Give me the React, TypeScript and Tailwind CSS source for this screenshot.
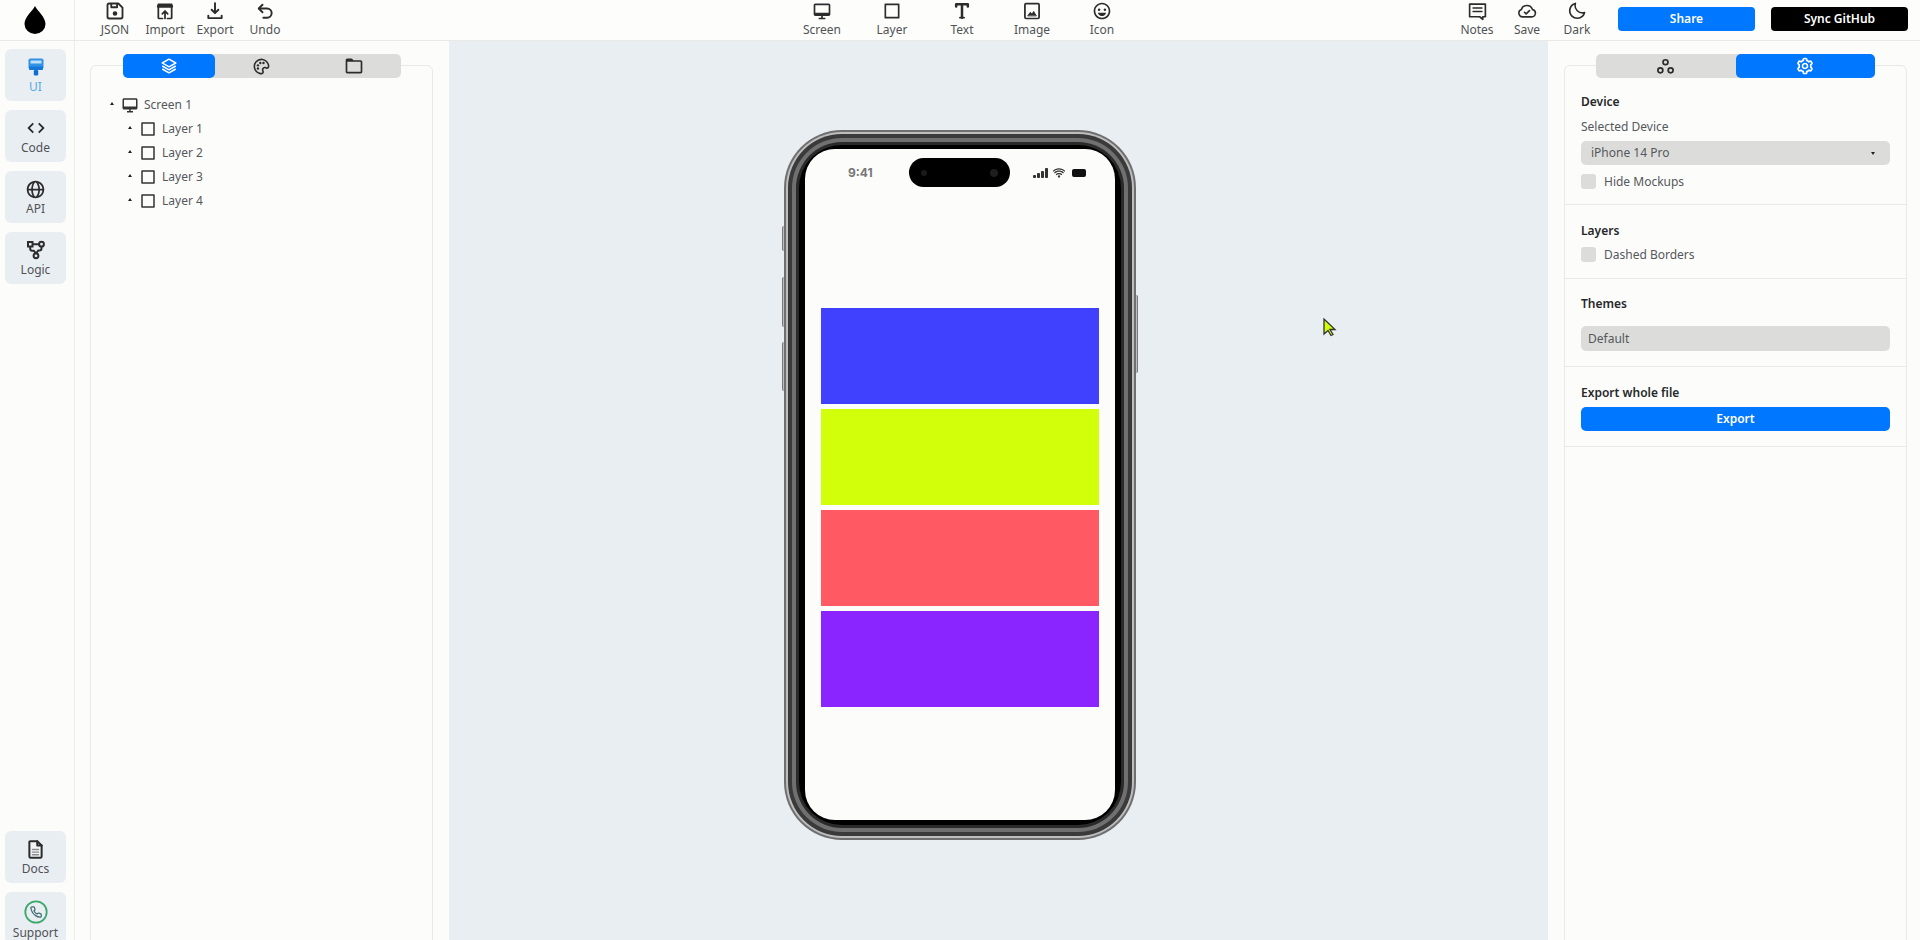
import React from "react";
import {
  BiDesktop, BiSquare, BiHappy, BiMoon, BiLayer, BiPalette, BiFolder, BiCog, BiCode, BiGlobe, BiWifi,
} from "react-icons/bi";

const font = { fontFamily: '"Noto Sans", "Open Sans", sans-serif' };

function Stroke({ size = 20, width = 2, children }: { size?: number; width?: number; children: React.ReactNode }) {
  return (
    <svg width={size} height={size} viewBox="0 0 24 24" fill="none" stroke="currentColor" strokeWidth={width} strokeLinecap="round" strokeLinejoin="round">
      {children}
    </svg>
  );
}

const Cloud = () => (
  <Stroke width={1.9}>
    <path d="M7 19h10.500a4.500 4.500 0 0 0 1-8.900A7 7 0 0 0 5.200 10.300 4.500 4.500 0 0 0 7 19z" />
    <path d="M9 13.500l2 2 4-4" />
  </Stroke>
);

const Floppy = () => (
  <Stroke width={2.2}>
    <path d="M5 3h11l5 5v11a2 2 0 0 1-2 2H5a2 2 0 0 1-2-2V5a2 2 0 0 1 2-2z" />
    <path d="M7.500 3.500v4h7v-4" />
    <circle cx="12" cy="15" r="1.700" fill="currentColor" />
  </Stroke>
);

const ImportIcon = () => (
  <Stroke width={2.1}>
    <path d="M9 21H5a1 1 0 0 1-1-1V4h16v16a1 1 0 0 1-1 1h-4" />
    <path d="M4 6.500h16" strokeWidth={3.400} />
    <path d="M12 21v-8M8.800 15.500 12 12l3.200 3.500" />
  </Stroke>
);

const ExportIcon = () => (
  <Stroke width={2.3}>
    <path d="M12 2.500v11" />
    <path d="M8 10.500l4 4 4-4" />
    <path d="M4 17.500v3h16v-3" />
  </Stroke>
);

const UndoIcon = () => (
  <Stroke width={2.3}>
    <path d="M9 4.500 4.500 9 9 13.500" />
    <path d="M5 9h9.500a5.500 5.500 0 0 1 0 11H10" />
  </Stroke>
);

const TextIcon = () => (
  <Stroke width={3} size={20}>
    <path d="M5 6.500V4h14v2.500" />
    <path d="M12 4v16" />
    <path d="M9.500 20h5" strokeWidth={2} />
  </Stroke>
);

const ImageIcon = () => (
  <Stroke width={2.100}>
    <rect x="3.500" y="3" width="17" height="18" rx="1.500" />
    <path d="M7 17.500l3-4 2 2 2-3 3 5z" fill="currentColor" strokeWidth={1} />
  </Stroke>
);

const NotesIcon = () => (
  <Stroke width={1.900} size={21}>
    <path d="M3 3.500h18v14.500h-3v3l-3.500-3H3z" />
    <path d="M7 8h10M7 12h10" />
  </Stroke>
);

const DocsIcon = () => (
  <Stroke width={2.300} size={21}>
    <path d="M6 2.500h8l5 5V20a1.500 1.500 0 0 1-1.500 1.500h-11A1.500 1.500 0 0 1 5 20V3.500a1 1 0 0 1 1-1z" fill="#f3f4f5" />
    <path d="M14 2.500v5h5" />
    <path d="M8.500 12h7M8.500 15h7M8.500 18h7" stroke="#8a8c8e" strokeWidth={1.500} />
  </Stroke>
);

const SupportIcon = () => (
  <svg width="24" height="24" viewBox="0 0 24 24" fill="none">
    <circle cx="12" cy="12" r="10.700" stroke="#3ea86d" strokeWidth="1.800" />
    <g transform="translate(5.800 5.800) scale(0.52)">
      <path d="M22 16.920v3a2 2 0 0 1-2.180 2 19.790 19.790 0 0 1-8.630-3.070 19.500 19.500 0 0 1-6-6 19.790 19.790 0 0 1-3.070-8.670A2 2 0 0 1 4.110 2h3a2 2 0 0 1 2 1.720 12.840 12.840 0 0 0 .7 2.810 2 2 0 0 1-.45 2.110L8.090 9.910a16 16 0 0 0 6 6l1.270-1.270a2 2 0 0 1 2.110-.45 12.840 12.840 0 0 0 2.810.7A2 2 0 0 1 22 16.920z" stroke="#3c6e70" strokeWidth="2.400" />
    </g>
  </svg>
);

const BrushIcon = () => (
  <svg width="16" height="18" viewBox="0 0 16 18">
    <rect x="0.500" y="0.500" width="15" height="10.500" rx="1.800" fill="#2f92e6" />
    <rect x="2.500" y="2.500" width="11" height="3" fill="#bfe0f8" />
    <rect x="1" y="8.500" width="14" height="3.500" rx="1" fill="#1478d8" />
    <rect x="5.800" y="12" width="4.400" height="5.500" rx="1.200" fill="#0f6fd0" />
  </svg>
);

function Nodes({ size = 20 }: { size?: number }) {
  return (
    <svg width={size} height={size} viewBox="0 0 20 20" fill="none" stroke="currentColor" strokeWidth="1.800">
      <circle cx="10" cy="5.500" r="2.600" />
      <circle cx="4.600" cy="14" r="2.600" />
      <circle cx="15.400" cy="14" r="2.600" />
    </svg>
  );
}

function Logic({ size = 20 }: { size?: number }) {
  return (
    <svg width={size} height={size} viewBox="0 0 20 20" fill="none" stroke="currentColor" strokeWidth="2">
      <rect x="2" y="2" width="4.500" height="4.500" />
      <circle cx="15.500" cy="4.200" r="2.400" />
      <circle cx="10" cy="15.800" r="2.400" />
      <path d="M6.500 4.200h6.600M4.200 6.500v2.200c0 1.300 1 2 2 2h1.500l2.300 2.800M15.500 6.600v2c0 1.300-1 2-2 2h-1.200L10 13.400" />
    </svg>
  );
}

function Drop() {
  return (
    <svg width="22" height="28" viewBox="0 0 22 28" fill="#000">
      <path d="M11 0C8.500 5 .5 11 .5 18a10.500 10 0 0 0 21 0C21.500 11 13.500 5 11 0z" />
    </svg>
  );
}

function Tool({ icon, label, width }: { icon: React.ReactNode; label: string; width: string }) {
  return (
    <div className={`flex flex-col items-center justify-start pt-[1px] text-[#505356] ${width}`}>
      <div className="flex h-[20px] items-center justify-center text-[#2c2c2c]">{icon}</div>
      <span className="text-[12px] leading-[18px] whitespace-nowrap">{label}</span>
    </div>
  );
}

function RailButton({ icon, label, active, tall }: { icon: React.ReactNode; label: string; active?: boolean; tall?: boolean }) {
  return (
    <div className={`flex h-[52px] w-[61px] shrink-0 flex-col items-center rounded-[6px] bg-[#e9eef3] pt-[7px] ${active ? "text-[#5aa9e6]" : "text-[#505356]"}`}>
      <div className={`flex items-center justify-center text-[#2c2c2c] ${tall ? "h-[25px]" : "h-[22px]"}`}>{icon}</div>
      <span className="text-[12px] leading-[18px] whitespace-nowrap">{label}</span>
    </div>
  );
}

function Caret() {
  return <span className="h-0 w-0 rotate-180 border-x-[2.5px] border-t-[3.5px] border-x-transparent border-t-[#222]" />;
}

function TreeRow({ icon, label, indent }: { icon: React.ReactNode; label: string; indent?: boolean }) {
  return (
    <div className={`flex h-[24px] items-center ${indent ? "pl-[37px]" : "pl-[19px]"}`}>
      <span className="mb-[3px] flex w-[9px] shrink-0"><Caret /></span>
      <span className="ml-[2px] flex w-[23px] shrink-0 items-center text-[#333]">{icon}</span>
      <span className="text-[12px] text-[#55585b]">{label}</span>
    </div>
  );
}

function Section({ children, className = "" }: { children: React.ReactNode; className?: string }) {
  return <div className={`border-b border-[#e9e9e7] px-[16px] ${className}`}>{children}</div>;
}

function Heading({ children }: { children: React.ReactNode }) {
  return <div className="text-[12px] leading-[18px] font-semibold text-[#26282a]">{children}</div>;
}

function Check({ label }: { label: string }) {
  return (
    <div className="flex items-center gap-[8px]">
      <span className="h-[15px] w-[15px] rounded-[3px] bg-[#dcdddb]" />
      <span className="text-[12px] leading-[15px] text-[#55585b]">{label}</span>
    </div>
  );
}

function Block({ color }: { color: string }) {
  return <div className={`h-[96px] w-full ${color}`} />;
}

function Phone() {
  return (
    <div className="relative h-[710px] w-[352px] shrink-0">
      <div className="absolute left-[-2px] top-[96px] h-[25px] w-[4px] rounded-l-[2px] border-l border-[#777] bg-[#bdbdbd]" />
      <div className="absolute left-[-2px] top-[147px] h-[50px] w-[4px] rounded-l-[2px] border-l border-[#777] bg-[#bdbdbd]" />
      <div className="absolute left-[-2px] top-[212px] h-[49px] w-[4px] rounded-l-[2px] border-l border-[#777] bg-[#bdbdbd]" />
      <div className="absolute right-[-2px] top-[165px] h-[78px] w-[4px] rounded-r-[2px] border-r border-[#777] bg-[#bdbdbd]" />
      <div className="relative h-full rounded-[58px] bg-[#6f6f6f] p-[2px]">
        <div className="h-full rounded-[56px] bg-[#bdbdbd] p-[2px]">
          <div className="h-full rounded-[54px] bg-[#3a3a3a] p-[4px]">
            <div className="h-full rounded-[50px] bg-[#707070] p-[4px]">
              <div className="h-full rounded-[46px] bg-[#2a2a2a] p-[3px]">
                <div className="h-full rounded-[43px] bg-black px-[6px] pt-[4px] pb-[5px]">
                  <div className="flex h-full flex-col rounded-[30px] bg-[#fcfcfb]">
                    <div className="flex h-[44px] items-start pt-[9px] pl-[43px]">
                      <div className="flex h-[29px] w-[61px] items-center">
                        <span className="text-[12px] font-bold text-[#777]" style={{ fontFamily: '"Inter", sans-serif' }}>9:41</span>
                      </div>
                      <div className="flex h-[29px] w-[101px] items-center justify-between rounded-full bg-black px-[12px]">
                        <span className="h-[6px] w-[6px] rounded-full bg-[#1a1a1a]" />
                        <span className="h-[8px] w-[8px] rounded-full bg-[#1e1e1e]" />
                      </div>
                      <div className="ml-[23px] flex h-[29px] items-center gap-[3px]">
                        <svg width="16" height="10" viewBox="0 0 16 10" fill="#333">
                          <rect x="0" y="7" width="3" height="3" rx=".8" />
                          <rect x="4" y="5" width="3" height="5" rx=".8" />
                          <rect x="8" y="3" width="3" height="7" rx=".8" />
                          <rect x="12" y="0" width="3" height="10" rx=".8" />
                        </svg>
                        <BiWifi size={14} color="#333" />
                        <span className="ml-[3px] h-[8px] w-[14px] rounded-[2px] bg-[#111]" />
                      </div>
                    </div>
                    <div className="mt-[115px] flex flex-col gap-[5px] px-[16px]">
                      <Block color="bg-[#4040ff]" />
                      <Block color="bg-[#d2ff0a]" />
                      <Block color="bg-[#ff5a64]" />
                      <Block color="bg-[#8a25ff]" />
                    </div>
                  </div>
                </div>
              </div>
            </div>
          </div>
        </div>
      </div>
    </div>
  );
}

export default function App() {
  return (
    <div className="relative flex h-[940px] w-full flex-col overflow-hidden bg-[#fcfcfb]" style={font}>
      <header className="flex h-[41px] shrink-0 items-stretch border-b border-[#e9e9e7] bg-[#fdfdfc]">
        <div className="flex w-[75px] shrink-0 items-center justify-center border-r border-[#ececea] pr-[4px] pb-[1px]">
          <Drop />
        </div>
        <div className="flex w-[215px] shrink-0 pl-[15px]">
          <Tool width="w-[50px]" label="JSON" icon={<Floppy />} />
          <Tool width="w-[50px]" label="Import" icon={<ImportIcon />} />
          <Tool width="w-[50px]" label="Export" icon={<ExportIcon />} />
          <Tool width="w-[50px]" label="Undo" icon={<UndoIcon />} />
        </div>
        <div className="flex pl-[497px]">
          <Tool width="w-[70px]" label="Screen" icon={<BiDesktop size={20} />} />
          <Tool width="w-[70px]" label="Layer" icon={<BiSquare size={20} />} />
          <Tool width="w-[70px]" label="Text" icon={<TextIcon />} />
          <Tool width="w-[70px]" label="Image" icon={<ImageIcon />} />
          <Tool width="w-[70px]" label="Icon" icon={<BiHappy size={20} />} />
        </div>
        <div className="ml-auto flex items-stretch pr-[12px]">
          <Tool width="w-[50px]" label="Notes" icon={<NotesIcon />} />
          <Tool width="w-[50px]" label="Save" icon={<Cloud />} />
          <Tool width="w-[50px]" label="Dark" icon={<BiMoon size={20} />} />
          <div className="ml-[16px] flex items-center gap-[16px] pb-[2px]">
            <div className="flex h-[24px] w-[137px] items-center justify-center rounded-[4px] bg-[#0077ff] text-[12px] font-semibold text-white">Share</div>
            <div className="flex h-[24px] w-[137px] items-center justify-center rounded-[4px] bg-black text-[12px] font-semibold text-white">Sync GitHub</div>
          </div>
        </div>
      </header>

      <main className="flex min-h-0 flex-1">
        <nav className="flex w-[75px] shrink-0 flex-col gap-[9px] border-r border-[#ececea] pt-[8px] pl-[5px]">
          <RailButton active label="UI" icon={<BrushIcon />} />
          <RailButton label="Code" icon={<BiCode size={22} />} />
          <RailButton label="API" icon={<BiGlobe size={21} />} />
          <RailButton label="Logic" icon={<Logic />} />
          <div className="mt-auto -mb-[4px] flex flex-col gap-[9px]">
            <RailButton label="Docs" icon={<DocsIcon />} />
            <RailButton tall label="Support" icon={<SupportIcon />} />
          </div>
        </nav>

        <aside className="w-[374px] shrink-0 pt-[24px] pr-[16px] pl-[15px]">
          <div className="h-[900px] rounded-[6px] border border-[#e9e9e7]">
            <div className="mx-auto -mt-[12px] flex h-[24px] w-[278px] rounded-[5px] bg-[#dcdddb]">
              <div className="flex flex-1 items-center justify-center rounded-[5px] bg-[#0077ff] text-white"><BiLayer size={18} /></div>
              <div className="flex flex-1 items-center justify-center text-[#2c2c2c]"><BiPalette size={19} /></div>
              <div className="flex flex-1 items-center justify-center text-[#2c2c2c]"><BiFolder size={20} /></div>
            </div>
            <div className="pt-[15px]">
              <TreeRow label="Screen 1" icon={<BiDesktop size={18} />} />
              <TreeRow indent label="Layer 1" icon={<BiSquare size={18} />} />
              <TreeRow indent label="Layer 2" icon={<BiSquare size={18} />} />
              <TreeRow indent label="Layer 3" icon={<BiSquare size={18} />} />
              <TreeRow indent label="Layer 4" icon={<BiSquare size={18} />} />
            </div>
          </div>
        </aside>

        <section className="min-w-0 flex-1 bg-[#e9eef3] pt-[89px] pl-[335px]">
          <Phone />
        </section>

        <aside className="w-[372px] shrink-0 pt-[24px] pr-[13px] pl-[16px]">
          <div className="h-[900px] rounded-[6px] border border-[#e9e9e7]">
            <div className="mx-auto -mt-[12px] flex h-[24px] w-[279px] rounded-[5px] bg-[#dcdddb]">
              <div className="flex flex-1 items-center justify-center text-[#2c2c2c]"><Nodes size={19} /></div>
              <div className="flex flex-1 items-center justify-center rounded-[5px] bg-[#0077ff] text-white"><BiCog size={20} /></div>
            </div>
            <Section className="pt-[15px] pb-[15px]">
              <Heading>Device</Heading>
              <div className="mt-[7px] text-[12px] leading-[18px] text-[#55585b]">Selected Device</div>
              <div className="mt-[5px] flex h-[24px] items-center justify-between rounded-[5px] bg-[#dcdddb] pr-[15px] pl-[10px] text-[12px] text-[#55585b]">
                iPhone 14 Pro
                <span className="h-0 w-0 border-x-[2.5px] border-t-[3.5px] border-x-transparent border-t-[#222]" />
              </div>
              <div className="mt-[9px]"><Check label="Hide Mockups" /></div>
            </Section>
            <Section className="pt-[17px] pb-[16px]">
              <Heading>Layers</Heading>
              <div className="mt-[7px]"><Check label="Dashed Borders" /></div>
            </Section>
            <Section className="pt-[16px] pb-[15px]">
              <Heading>Themes</Heading>
              <div className="mt-[13px] flex h-[25px] items-center rounded-[5px] bg-[#dcdddb] pl-[7px] text-[12px] text-[#55585b]">Default</div>
            </Section>
            <Section className="pt-[17px] pb-[15px]">
              <Heading>Export whole file</Heading>
              <div className="mt-[5px] flex h-[24px] items-center justify-center rounded-[5px] bg-[#0077ff] text-[12px] font-semibold text-white">Export</div>
            </Section>
          </div>
        </aside>
      </main>

      <svg className="absolute left-[1323px] top-[318px]" width="14" height="20" viewBox="0 0 14 20">
        <path d="M1 1l0 15 4-3.500 3 5 2-1-3-5h5z" fill="#d2ff0a" stroke="#333" strokeWidth="1.300" />
      </svg>
    </div>
  );
}
